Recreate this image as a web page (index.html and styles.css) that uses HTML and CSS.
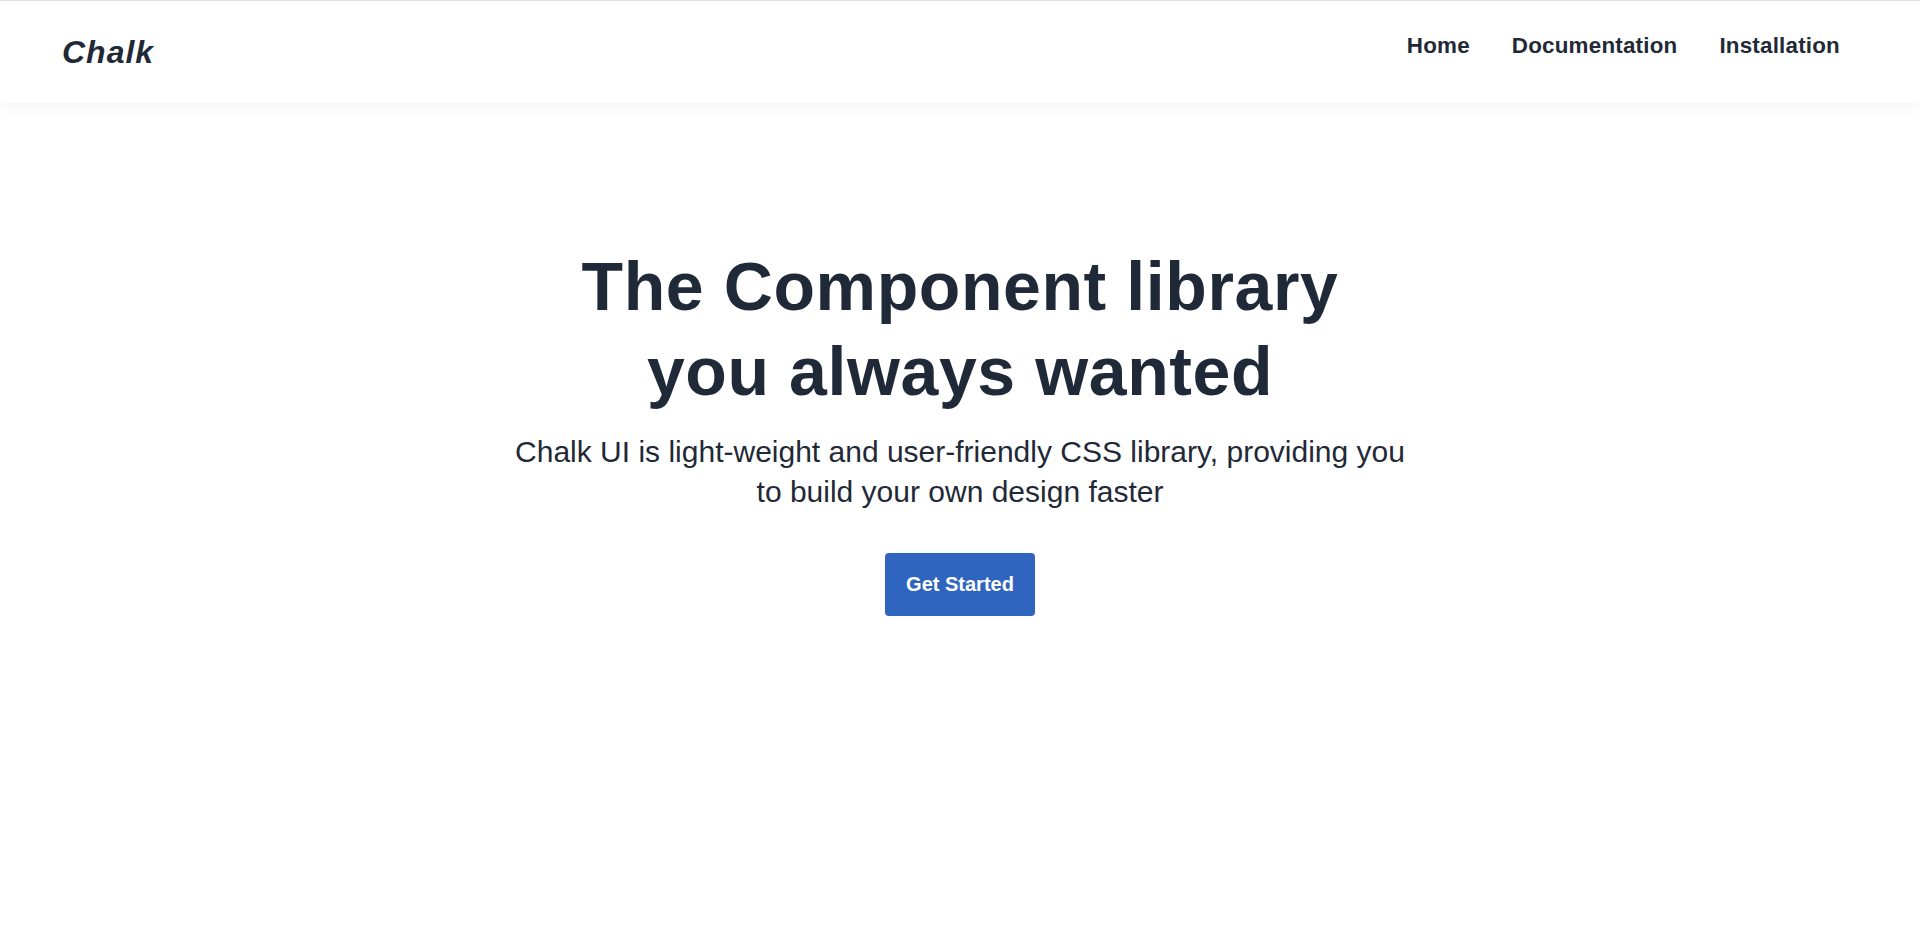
FILE: index.html
```html
<!DOCTYPE html>
<html lang="en">
<head>
<meta charset="utf-8">
<title>Chalk UI</title>
<link rel="stylesheet" href="styles.css">
</head>
<body>
<header class="topbar">
  <a class="logo" href="#">Chalk</a>
  <nav class="nav">
    <a class="nav-link" href="#">Home</a>
    <a class="nav-link" href="#">Documentation</a>
    <a class="nav-link" href="#">Installation</a>
  </nav>
</header>
<main class="hero">
  <h1 class="hero-title">The Component library you always wanted</h1>
  <p class="hero-text">Chalk UI is light-weight and user-friendly CSS library, providing you to build your own design faster</p>
  <a class="btn-primary" href="#">Get Started</a>
</main>
</body>
</html>
```

FILE: styles.css
```css
* {
  box-sizing: border-box;
}

html, body {
  margin: 0;
  padding: 0;
  background: #ffffff;
}

body {
  font-family: "Liberation Sans", Arial, sans-serif;
  color: #1f2937;
  min-height: 946px;
}

.topbar {
  height: 103px;
  border-top: 1px solid #d9dce1;
  background: #ffffff;
  display: flex;
  align-items: center;
  justify-content: space-between;
  padding: 0 80px 0 62px;
  box-shadow: 0 4px 16px rgba(0, 0, 0, 0.05);
  position: relative;
}

.logo {
  font-size: 32px;
  font-weight: 700;
  font-style: italic;
  letter-spacing: 1px;
  color: #1f2937;
  text-decoration: none;
}

.nav {
  display: flex;
  gap: 42px;
  padding-bottom: 13px;
}

.nav-link {
  font-size: 22.4px;
  font-weight: 700;
  letter-spacing: 0.2px;
  color: #1f2937;
  text-decoration: none;
}

.hero {
  display: flex;
  flex-direction: column;
  align-items: center;
  text-align: center;
  padding-top: 141px;
}

.hero-title {
  margin: 0;
  max-width: 820px;
  font-size: 68px;
  line-height: 85px;
  font-weight: 700;
  letter-spacing: 0.6px;
  color: #1f2937;
}

.hero-text {
  margin: 18px 0 0;
  max-width: 910px;
  font-size: 30px;
  line-height: 40px;
  color: #1f2937;
}

.btn-primary {
  margin-top: 41px;
  display: inline-block;
  padding: 20px 21px;
  background: #2f65be;
  color: #ffffff;
  font-size: 20px;
  line-height: 23px;
  font-weight: 700;
  text-decoration: none;
  border-radius: 4px;
}
```
